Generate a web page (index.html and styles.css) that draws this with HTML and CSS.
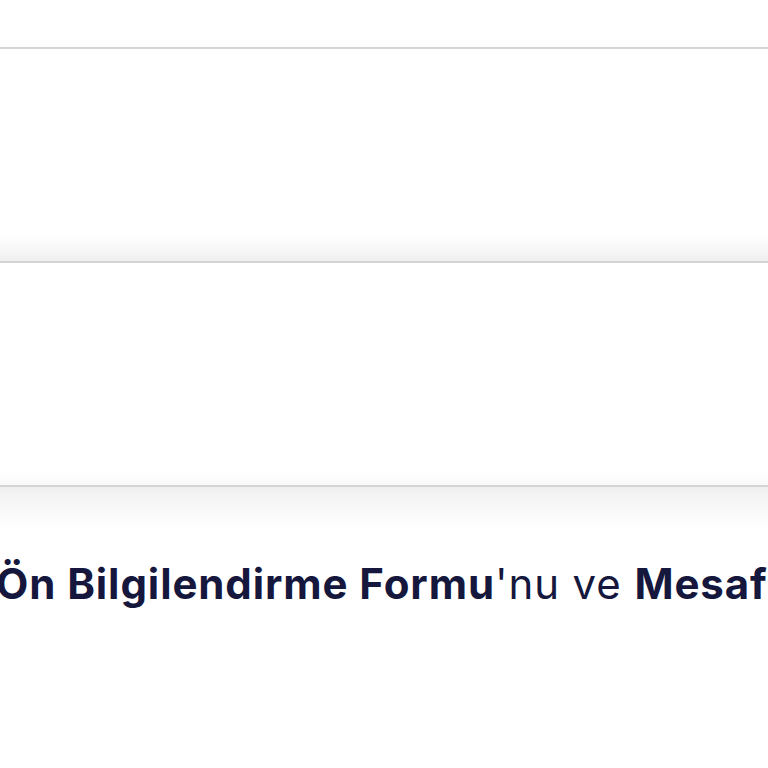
FILE: index.html
```html
<!DOCTYPE html>
<html lang="tr">
<head>
<meta charset="utf-8">
<link rel="stylesheet" href="styles.css">
</head>
<body>
<div class="page">
  <div class="panel panel-top"></div>
  <div class="panel panel-mid"></div>
  <div class="panel panel-low"></div>
  <div class="shade"></div>
  <p class="agree"><b>Ön Bilgilendirme Formu</b>'nu ve <b>Mesafeli Satış Sözleşmesi</b>'ni okudum, onaylıyorum.</p>
</div>
</body>
</html>
```
FILE: styles.css
```css
html, body {
  margin: 0;
  padding: 0;
  background: #ffffff;
}
.page {
  width: 768px;
  height: 768px;
  overflow: hidden;
  display: flex;
  flex-direction: column;
  background: #ffffff;
}
.panel {
  flex: none;
  border-bottom: 2px solid #d4d4d4;
}
.panel-top {
  height: 47px;
  background: linear-gradient(to bottom, #ffffff 0%, #ffffff 80%, #fcfcfc 100%);
}
.panel-mid {
  height: 212px;
  background: linear-gradient(to bottom, #ffffff 0%, #ffffff 88%, #f5f5f5 96%, #eeeeee 100%);
}
.panel-low {
  height: 222px;
  background: linear-gradient(to bottom, #ffffff 0%, #ffffff 94%, #f9f9f9 100%);
}
.shade {
  flex: none;
  height: 44px;
  background: linear-gradient(to bottom, #efefef 0%, #f6f6f6 30%, #fbfbfb 70%, #ffffff 100%);
}
.agree {
  margin: 27px 0 0 -4px;
  white-space: nowrap;
  font-family: "Inter", "Noto Sans", sans-serif;
  font-size: 42px;
  font-weight: 400;
  color: #15173d;
  letter-spacing: 0.9px;
}
.agree b {
  font-weight: 700;
}
```
